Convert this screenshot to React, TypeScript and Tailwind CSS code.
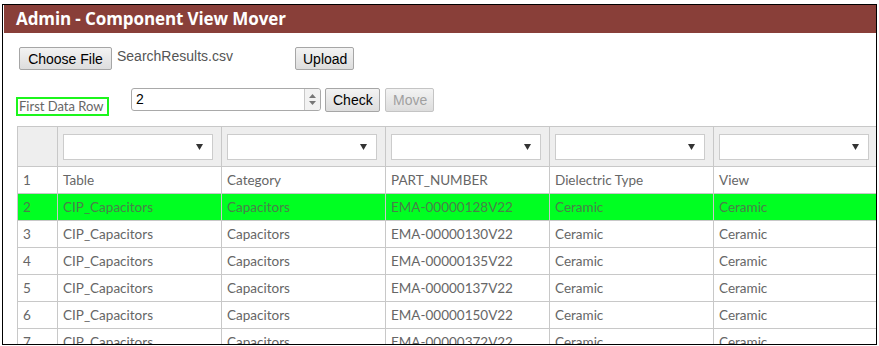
import React from "react";

const rows = [
  ["CIP_Capacitors", "Capacitors", "EMA-00000130V22", "Ceramic", "Ceramic"],
  ["CIP_Capacitors", "Capacitors", "EMA-00000135V22", "Ceramic", "Ceramic"],
  ["CIP_Capacitors", "Capacitors", "EMA-00000137V22", "Ceramic", "Ceramic"],
  ["CIP_Capacitors", "Capacitors", "EMA-00000150V22", "Ceramic", "Ceramic"],
  ["CIP_Capacitors", "Capacitors", "EMA-00000372V22", "Ceramic", "Ceramic"],
];

const btnBase =
  "h-[23px] px-[7px] border rounded-[2px] bg-gradient-to-b from-[#f3f3f3] to-[#dddddd] text-[14px] leading-none font-['Liberation_Sans',Arial,sans-serif]";
const btn = btnBase + " border-[#a6a6a6] text-black";
const btnDisabled = btnBase + " border-[#c4c4c4] text-[#a0a0a0]";

function Select() {
  return (
    <div className="h-[26px] w-[150px] border border-[#cccccc] bg-white flex items-center justify-end pr-[9px]">
      <svg width="7" height="6" viewBox="0 0 7 6">
        <path d="M0 0 L7 0 L3.5 6 Z" fill="#333" />
      </svg>
    </div>
  );
}

const cell =
  "border border-[#c8c8c8] h-[27px] pl-[5px] text-left align-middle whitespace-nowrap";

export default function App() {
  return (
    <div className="w-[879px] h-[346px] bg-white overflow-hidden pt-[4px] pl-[2px]">
      <div className="w-[875px] h-[341px] border border-black overflow-hidden pl-px">
        <div className="h-[28px] bg-[#893f39] flex items-center pl-[12px] -mr-[4px]">
          <span className="text-white font-bold text-[17px] font-['Open_Sans',sans-serif] tracking-[-0.1px]">
            Admin - Component View Mover
          </span>
        </div>
        <div className="pl-[15px] pt-[14px]">
          <div className="flex items-center h-[23px]">
            <div className="w-[276px] flex items-center">
              <button className={btn + " w-[93px]"}>Choose File</button>
              <span className="ml-[5px] text-[14px] text-[#555] font-['Liberation_Sans',Arial,sans-serif] -mt-[4px]">
                SearchResults.csv
              </span>
            </div>
            <button className={btn + " w-[59px]"}>Upload</button>
          </div>
          <div className="flex items-start mt-[18px] h-[28px]">
            <div className="mt-[9px] -ml-[3px] w-[93px] h-[19px] border-2 border-[#1cf51c] flex items-center pl-[1px] text-[13px] text-[#666] font-['Lato',sans-serif] leading-none whitespace-nowrap">
              First Data Row
            </div>
            <div className="ml-[22px] w-[190px] h-[23px] border border-[#a9a9a9] rounded-[3px] flex items-center bg-white">
              <span className="flex-1 pl-[4px] text-[14px] text-black font-['Liberation_Sans',Arial,sans-serif]">2</span>
              <div className="w-[16px] h-full border-l border-[#c8c8c8] flex flex-col items-center justify-center gap-[3px] bg-[#f2f2f2] rounded-r-[3px]">
                <svg width="7" height="4" viewBox="0 0 7 4"><path d="M0 4 L3.5 0 L7 4 Z" fill="#777" /></svg>
                <svg width="7" height="4" viewBox="0 0 7 4"><path d="M0 0 L3.5 4 L7 0 Z" fill="#777" /></svg>
              </div>
            </div>
            <button className={btn + " ml-[4px] w-[55px] h-[24px]"}>Check</button>
            <button className={btnDisabled + " ml-[5px] w-[49px] h-[24px]"}>Move</button>
          </div>
          <table className="mt-[10px] -ml-[2px] border-collapse text-[13.5px] text-[#666] font-['Lato',sans-serif] table-fixed w-[861px]">
            <colgroup>
              <col className="w-[40px]" />
              <col className="w-[164px]" />
              <col className="w-[164px]" />
              <col className="w-[164px]" />
              <col className="w-[164px]" />
              <col className="w-[165px]" />
            </colgroup>
            <thead>
              <tr className="h-[40px] bg-[#eeeeee]">
                <th className="border border-[#c8c8c8]" />
                {[0, 1, 2, 3, 4].map((i) => (
                  <th key={i} className="border border-[#c8c8c8] pl-[5px] align-middle">
                    <Select />
                  </th>
                ))}
              </tr>
            </thead>
            <tbody>
              <tr>
                <td className={cell}>1</td>
                <td className={cell}>Table</td>
                <td className={cell}>Category</td>
                <td className={cell}>PART_NUMBER</td>
                <td className={cell}>Dielectric Type</td>
                <td className={cell}>View</td>
              </tr>
              <tr className="bg-[#00ff22] text-[#4a804a]">
                <td className={cell}>2</td>
                <td className={cell}>CIP_Capacitors</td>
                <td className={cell}>Capacitors</td>
                <td className={cell}>EMA-00000128V22</td>
                <td className={cell}>Ceramic</td>
                <td className={cell}>Ceramic</td>
              </tr>
              {rows.map((r, i) => (
                <tr key={i}>
                  <td className={cell}>{i + 3}</td>
                  {r.map((c, j) => (
                    <td key={j} className={cell}>
                      {c}
                    </td>
                  ))}
                </tr>
              ))}
            </tbody>
          </table>
        </div>
      </div>
    </div>
  );
}
